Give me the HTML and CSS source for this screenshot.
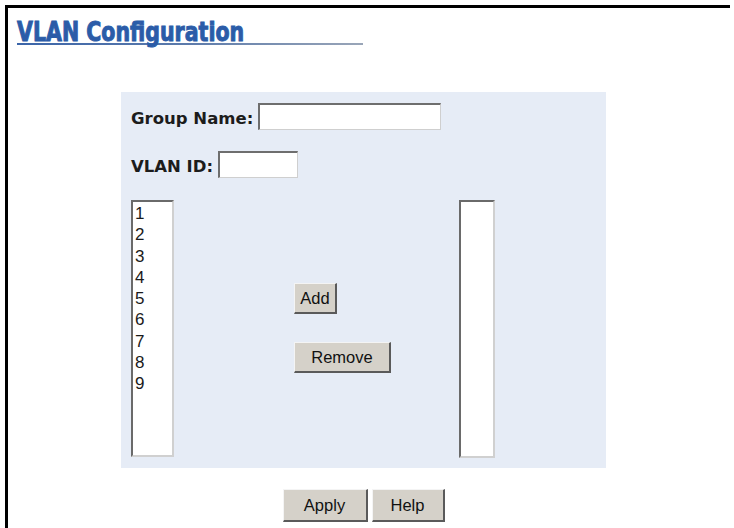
FILE: index.html
```html
<!DOCTYPE html>
<html lang="en">
<head>
<meta charset="utf-8">
<title>VLAN Configuration</title>
<link rel="stylesheet" href="styles.css">
</head>
<body>
<div class="frame">
  <h1 class="title"><span class="title-text">VLAN Configuration</span></h1>
  <form class="panel">
    <div class="row">
      <label class="lbl" for="gname">Group Name:</label>
      <input id="gname" class="field field-name" type="text">
    </div>
    <div class="row row-id">
      <label class="lbl" for="vid">VLAN ID:</label>
      <input id="vid" class="field field-id" type="text">
    </div>
    <div class="lists">
      <div class="listbox listbox-src" role="listbox">
        <div class="opt">1</div>
        <div class="opt">2</div>
        <div class="opt">3</div>
        <div class="opt">4</div>
        <div class="opt">5</div>
        <div class="opt">6</div>
        <div class="opt">7</div>
        <div class="opt">8</div>
        <div class="opt">9</div>
      </div>
      <div class="actions">
        <button type="button" class="btn btn-add">Add</button>
        <button type="button" class="btn btn-remove">Remove</button>
      </div>
      <div class="listbox listbox-dst" role="listbox"></div>
    </div>
  </form>
  <div class="footer">
    <button type="button" class="btn btn-apply">Apply</button>
    <button type="button" class="btn btn-help">Help</button>
  </div>
</div>
</body>
</html>
```

FILE: styles.css
```css
html, body {
  margin: 0;
  padding: 0;
  background: #fff;
}
body {
  font-family: "Liberation Sans", Arial, sans-serif;
}
.frame {
  box-sizing: border-box;
  margin: 5px 0 0 5px;
  width: 725px;
  height: 523px;
  border-left: 3px solid #000;
  border-top: 3px solid #000;
}
.title {
  margin: 11px 0 0 9px;
  width: 346px;
  height: 26px;
  font: bold 26px/26px "DejaVu Sans", Verdana, sans-serif;
  color: #2b5ca8;
  white-space: nowrap;
  background: linear-gradient(to right, #3b65a9, #5d7bab 50%, #9aa6b8) left bottom / 100% 2px no-repeat;
}
.title-text {
  display: inline-block;
  transform: scaleX(0.79);
  transform-origin: left center;
  -webkit-text-stroke: 1px #2b5ca8;
}
.panel {
  box-sizing: border-box;
  margin: 47px 0 0 113px;
  width: 485px;
  height: 376px;
  padding: 11px 10px;
  background: #e6ecf6;
}
.row {
  display: flex;
  align-items: center;
  height: 27px;
  gap: 5px;
}
.row-id {
  margin-top: 21px;
}
.lbl {
  font: bold 16.5px "DejaVu Sans", Verdana, sans-serif;
  color: #1c1c1c;
  padding-top: 3px;
}
.field {
  box-sizing: border-box;
  height: 27px;
  margin: 0;
  padding: 0 3px;
  border-style: solid;
  border-width: 2px 1px 1px 2px;
  border-color: #6e6e6e #cfcfcf #cfcfcf #6e6e6e;
  background: #fff;
  font: 15px "Liberation Sans", Arial, sans-serif;
  outline: none;
}
.field-name {
  width: 183px;
}
.field-id {
  width: 80px;
}
.lists {
  display: flex;
  align-items: flex-start;
  margin-top: 22px;
  height: 257px;
}
.listbox {
  box-sizing: border-box;
  height: 257px;
  background: #fff;
  border-style: solid;
  border-width: 2px;
  border-color: #6a6a6a #d0d0d0 #d0d0d0 #6a6a6a;
}
.listbox-src {
  width: 43px;
  padding: 1px 0 0 2px;
}
.listbox-dst {
  width: 36px;
  height: 258px;
  margin-left: 68px;
}
.opt {
  font-size: 17px;
  line-height: 21.3px;
  color: #1a1a1a;
}
.actions {
  display: flex;
  flex-direction: column;
  align-items: flex-start;
  gap: 28px;
  width: 97px;
  margin: 83px 0 0 120px;
}
.btn {
  box-sizing: border-box;
  margin: 0;
  padding: 0;
  background: #d5d1c9;
  border-style: solid;
  border-width: 1px 2px 2px 1px;
  border-color: #f4f4f4 #5a5a5a #5a5a5a #f4f4f4;
  font: 16.5px "Liberation Sans", Arial, sans-serif;
  color: #111;
}
.btn-add {
  width: 43px;
  height: 31px;
}
.btn-remove {
  width: 97px;
  height: 31px;
}
.footer {
  display: flex;
  justify-content: center;
  gap: 4px;
  width: 485px;
  margin: 21px 0 0 113px;
}
.btn-apply {
  width: 85px;
  height: 33px;
}
.btn-help {
  width: 73px;
  height: 33px;
}
```
